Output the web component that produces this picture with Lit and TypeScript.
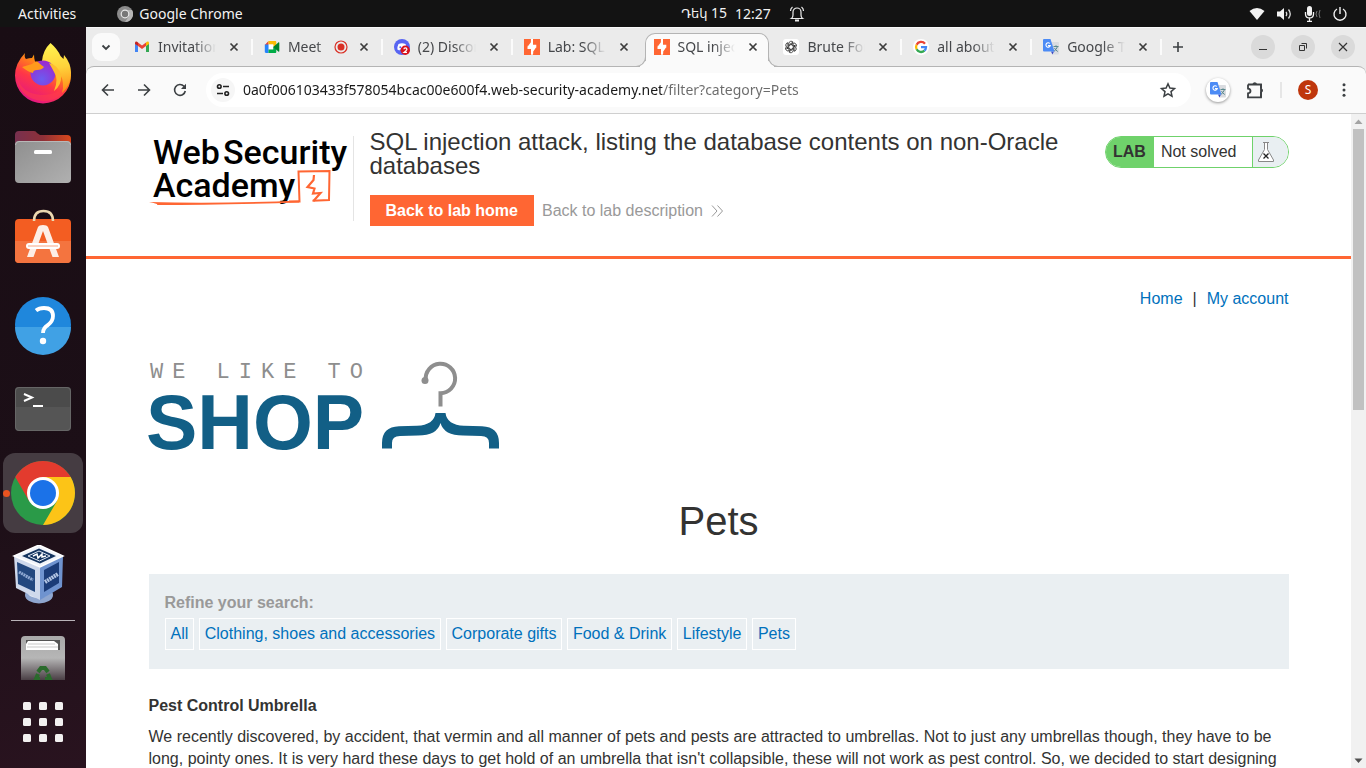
import { LitElement, html, css, svg, nothing, type TemplateResult } from "lit";
import { customElement, property } from "lit/decorators.js";
import { classMap } from "lit/directives/class-map.js";

/* ---------- favicons, 16 x 16 ---------- */

const gmail = svg`<svg viewBox="0 0 16 16" width="16" height="16" aria-hidden="true">
  <path fill="#4285f4" d="M1 4.500V13h3V6.800z"/><path fill="#34a853" d="M12 6.800V13h3V4.500z"/>
  <path fill="#ea4335" d="M4 7V3.600l4 3 4-3V7l-4 3z"/><path fill="#c5221f" d="M1 5V4c0-1.600 1.700-2.200 3-.400V7z"/>
  <path fill="#fbbc04" d="M15 5V4c0-1.600-1.700-2.200-3-.400V7z"/></svg>`;
const meet = svg`<svg viewBox="0 0 16 16" width="16" height="16" aria-hidden="true">
  <path fill="#ea4335" d="M4.500 2v4H.800z"/><path fill="#fbbc04" d="M4.500 2h6.500c.900 0 1.300.500 1.300 1.300V6l-3 2V5.500H4.500z"/>
  <path fill="#fff" d="M4.500 5.500h4.800v5H4.500z"/>
  <path fill="#2684fc" d="M.800 5.500h3.700V14H2c-.800 0-1.200-.500-1.200-1.200z"/>
  <path fill="#00ac47" d="M4.500 10.500h4.800V8l3-2v6.700c0 .900-.400 1.300-1.300 1.300H4.500z"/>
  <path fill="#00832d" d="M9.300 8l5-4.400c.600-.500 1-.200 1 .400v8c0 .600-.400.900-1 .400z"/></svg>`;
const discord = svg`<svg viewBox="0 0 16 16" width="16" height="16" aria-hidden="true">
  <circle cx="8" cy="8" r="8" fill="#5865f2"/><path fill="#fff" d="M4.500 5q3.500-1.500 7 0Q13 8 12.600 10.500l-2 1-.600-1h-4l-.600 1-2-1Q3 8 4.500 5z"/>
  <circle cx="6.300" cy="8.300" r="1" fill="#5865f2"/>
  <circle cx="11.300" cy="11.300" r="4.700" fill="#d8121b"/>
  <path d="M9.900 10.300q0-1.500 1.500-1.500t1.500 1.400q0 .800-2.900 3.200h3" fill="none" stroke="#fff" stroke-width="1.200"/></svg>`;
const burp = svg`<svg viewBox="0 0 16 16" width="16" height="16" aria-hidden="true">
  <path fill="#ff6633" d="M0 0h16v16H0z"/>
  <path fill="#fff" d="M6.800 0H9v5.700h3.300v3L9 15.800H7V10H3.500V7.300z"/>
  <path fill="#ff6633" d="M6.900 0v3.300L3.500 7.800V0zM9.200 16v-3.600l3.200-4.500V16z"/></svg>`;
const openai = svg`<svg viewBox="0 0 16 16" width="16" height="16" aria-hidden="true">
  <rect width="16" height="16" rx="3" fill="#fff"/>
  <g fill="none" stroke="#222" stroke-width=".800">
  ${[0, 60, 120, 180, 240, 300].map(
    (a) => svg`<path transform="rotate(${a} 8 8)" d="M5.800 9.200V4.600a2.400 2.400 0 0 1 4.300-1.400L6.400 5.500"/>`
  )}</g></svg>`;
const google = svg`<svg viewBox="0 0 16 16" width="16" height="16" aria-hidden="true">
  <circle cx="8" cy="8" r="8" fill="#fff"/><g fill="none" stroke-width="2.300">
  <path stroke="#ea4335" d="M12 4.700A5 5 0 0 0 3.600 5.700"/><path stroke="#fbbc04" d="M3.600 5.700a5 5 0 0 0 0 4.600"/>
  <path stroke="#34a853" d="M3.600 10.300a5 5 0 0 0 7.800 1.400"/><path stroke="#4285f4" d="M11.400 11.700A5 5 0 0 0 13 8.200H8"/></g></svg>`;
const translate = svg`<svg viewBox="0 0 16 16" width="16" height="16" aria-hidden="true">
  <path fill="#dadce0" d="M6 3h9q1 0 1 1v10.500q0 1-1 1H9.500z"/>
  <path d="M10.500 7.500h5M13 6.300v1.200M14.500 7.500q-.800 3-3.500 4.800M11.500 9q1 2.300 3.300 3.500" fill="none" stroke="#5c8a8f" stroke-width="1"/>
  <path fill="#3a49c4" d="M8 12.500h3l-1.600 3z"/>
  <path fill="#4c8bf5" d="M1 0h6.500l4 12.500H1q-1 0-1-1V1q0-1 1-1z"/>
  <path d="M6.800 4.500a2.200 2.200 0 1 0 .500 2.100H5" fill="none" stroke="#fff" stroke-width="1.100"/></svg>`;

const cross = svg`<svg viewBox="0 0 16 16" width="16" height="16" aria-hidden="true">
  <path d="M4.500 4.500l7 7M11.500 4.500l-7 7" stroke="#3c3c3c" stroke-width="1.700"/></svg>`;

/* ---------- dock icons, 64 x 64 ---------- */

const firefox = svg`<svg viewBox="0 0 64 64" width="64" height="64" aria-hidden="true">
  <defs>
    <linearGradient id="ffb" x1=".8" y1="0" x2=".3" y2="1"><stop offset="0" stop-color="#fff44f"/><stop offset=".35" stop-color="#ff980e"/><stop offset=".65" stop-color="#ff3647"/><stop offset="1" stop-color="#e31587"/></linearGradient>
    <linearGradient id="ffy" x1=".5" y1="0" x2=".6" y2="1"><stop offset="0" stop-color="#fff44f"/><stop offset=".5" stop-color="#ffd23a"/><stop offset="1" stop-color="#ff8a16"/></linearGradient>
    <radialGradient id="ffp" cx=".45" cy=".75" r=".7"><stop offset="0" stop-color="#6b5cf0"/><stop offset="1" stop-color="#9a2bd0"/></radialGradient>
  </defs>
  <path fill="url(#ffb)" d="M14 12q-1 4 1 6 3-1 6-1l2-3.500q0 4 1 7h12q2-12 3-17 8 7 12 16l5 2q4 6 4 13a28 28 0 0 1-56 0q0-12 10-22.500z"/>
  <path fill="#ff3d4a" opacity=".55" d="M6 36q4 16 24 18 18 0 27-13-4 19-25 19Q8 58 6 36z"/>
  <path fill="url(#ffy)" d="M31 20Q32 9 39.500 2q7 6 10 13 2 2 3 3l.500-4q7 8 7 18 0 12-9 20 3-10-2-19-6-12-18-13z"/>
  <circle cx="32" cy="32" r="12.500" fill="url(#ffp)"/>
  <path fill="#ff9a1c" d="M11 26l10-3q3-3 6-2 3 3 6 5-2 3-7 3-4 0-4 3-5-1-11-6z"/>
  <path fill="#ffbd2e" d="M38 22q9 2 12 12 1 10-7 16 5-12 0-19-2-4-5-9z"/></svg>`;
const files = svg`<svg viewBox="0 0 64 64" width="64" height="64" aria-hidden="true">
  <defs><linearGradient id="fo" x2="1"><stop offset="0" stop-color="#77304f"/><stop offset=".5" stop-color="#8e3038"/><stop offset="1" stop-color="#d9481c"/></linearGradient>
  <linearGradient id="fg" x2="1" y2="1"><stop offset="0" stop-color="#8f8f8f"/><stop offset="1" stop-color="#b0b0b0"/></linearGradient></defs>
  <path fill="url(#fo)" d="M8 6h15q2 0 3 2l3 2h27q4 0 4 4v24H4V10q0-4 4-4z"/>
  <rect x="4" y="16" width="56" height="42" rx="4" fill="url(#fg)"/><path d="M4.500 20q0-3.500 3.500-3.500h48q3.500 0 3.500 3.500" fill="none" stroke="#b8b8b8"/>
  <rect x="23" y="25" width="18" height="4" rx="1.500" fill="#fff"/></svg>`;
const software = svg`<svg viewBox="0 0 64 64" width="64" height="64" aria-hidden="true">
  <rect x="4" y="10" width="56" height="44" rx="4" fill="#f35d22"/><path fill="#f4743f" d="M4 32h56v18q0 4-4 4H8q-4 0-4-4z"/>
  <path d="M23 12q0-10 9.500-10T42 12" fill="none" stroke="#ecd9b0" stroke-width="2.500"/>
  <path fill="#fdeee6" d="M16 48l11-30q1-2 5-2t5 2l11 30h-6.500L32 22l-9.500 26z"/>
  <rect x="15" y="34" width="34" height="6" rx="3" fill="#fff"/><path d="M17 37h30" stroke="#f7a683"/></svg>`;
const help = svg`<svg viewBox="0 0 64 64" width="64" height="64" aria-hidden="true">
  <circle cx="32" cy="32" r="28" fill="#1f87dc"/><path fill="#40a1e5" d="M4 34h56a28 28 0 0 1-56 0z"/>
  <path d="M25 17.500q3-2.500 8-2.500 9 0 9 8 0 5-5 9-5 3-5 8" fill="none" stroke="#fff" stroke-width="3.800"/><circle cx="32" cy="48" r="3.200" fill="#fff"/></svg>`;
const terminal = svg`<svg viewBox="0 0 64 64" width="64" height="64" aria-hidden="true">
  <rect x="4" y="10" width="56" height="44" rx="4" fill="#555"/><path fill="#4b4b4b" d="M8 10h48q4 0 4 4v16H4V14q0-4 4-4z"/>
  <rect x="4.500" y="10.500" width="55" height="43" rx="3.500" fill="none" stroke="#666"/>
  <path d="M13 17l8 3.500-8 3.500" fill="none" stroke="#fff" stroke-width="2"/><path d="M22 29h10" stroke="#fff" stroke-width="2"/></svg>`;
const chrome = svg`<svg viewBox="0 0 64 64" width="64" height="64" aria-hidden="true">
  <circle cx="32" cy="32" r="32" fill="#2a9a48"/>
  <path fill="#fcc417" d="M32 16h27.700A32 32 0 0 1 32 64l14-24z"/>
  <path fill="#e33b2e" d="M4.300 16A32 32 0 0 1 59.700 16H32L18 40z"/>
  <circle cx="32" cy="32" r="16" fill="#fff"/><circle cx="32" cy="32" r="13" fill="#1b72e8"/></svg>`;
const virtualbox = svg`<svg viewBox="0 0 64 64" width="64" height="64" aria-hidden="true">
  <ellipse cx="28" cy="50" rx="14" ry="8.500" fill="#8fa6cf"/><ellipse cx="27" cy="48" rx="10" ry="5" fill="#e4ebf6"/>
  <path fill="#f1f4fa" d="M28 0l24 11-23 11L3 11z"/><path fill="#cfd9ec" d="M3 11l26 11v33L5 43z"/><path fill="#6f93cf" d="M52 11L29 22v33l22-13z"/>
  <path d="M28 0l24 11-23 11L3 11z" fill="none" stroke="#fff" stroke-width="1.500"/>
  <path fill="#14345f" d="M28 3.500l17 7.500-16 7.500L11 11z"/><path d="M28 6l11 5-10.500 5L17 11z" fill="none" stroke="#dfe7f4"/>
  <path d="M22 11l4-2 1 4 4-4v3l4-1" fill="none" stroke="#fff" stroke-width="1.500"/>
  <path fill="#23487f" d="M6 17l18 8v22L7 39z"/><path fill="#1b3c78" d="M48 17l-15 8v22l15-9z"/>
  <path d="M8 27l14 8" stroke="#8fa9d3" stroke-width="3" stroke-dasharray="2 .600"/><path d="M34 37l13-8" stroke="#b4c6e4" stroke-width="4" stroke-dasharray="2 .600"/></svg>`;
const trash = svg`<svg viewBox="0 0 64 44" width="64" height="44" aria-hidden="true">
  <defs><linearGradient id="tr" x2="0" y2="1"><stop offset="0" stop-color="#a9a9a9"/><stop offset=".5" stop-color="#b6b6b6"/><stop offset="1" stop-color="#4a3f45"/></linearGradient></defs>
  <path fill="url(#tr)" d="M14 0h36q4 0 4 4v40H10V4q0-4 4-4z"/><path fill="#555" d="M15 4h34v10H15z"/>
  <path fill="#fff" d="M17 5h26l4 3v6H15V8z"/><path d="M17 8h27M16 11h31" stroke="#c9c9c9"/>
  <g fill="none" stroke="#2a6a2c" stroke-width="4"><path d="M27 36l3-4h4l3 4"/><path d="M27 38l-2 5h4M37 38l2 5h-5"/></g></svg>`;
const appGrid = svg`<svg viewBox="0 0 40 40" width="40" height="40" aria-hidden="true">
  ${[0, 16, 32].map((y) => [0, 16, 32].map((x) => svg`<rect x=${x} y=${y} width="8" height="8" rx="1.500" fill="#f2f0f0"/>`))}</svg>`;

/* ---------- desktop top bar ---------- */

@customElement("desktop-bar")
class DesktopBar extends LitElement {
  static styles = css`
    :host { display: grid; grid-template-columns: 1fr auto 1fr; align-items: center; height: 27px; background: #131313;
      color: #f2f2f2; font: 14px/20px "Noto Sans", "DejaVu Sans", sans-serif; }
    .side, .status, .clock { display: flex; align-items: center; }
    .side { padding-left: 18px; gap: 41px; }
    button { display: flex; align-items: center; gap: 6px; padding: 0; border: 0; background: none; color: inherit; font: inherit; }
    .clock { gap: 18px; padding-left: 120px; }
    .status { justify-content: flex-end; gap: 11px; padding-right: 18px; }
    .armenian { font-family: "DejaVu Sans", sans-serif; font-size: 13px; }
    .date { gap: 8px; }
  `;
  render() {
    return html`
      <div class="side">
        <button>Activities</button>
        <button>
          <svg viewBox="0 0 16 16" width="16" height="16" aria-hidden="true"><circle cx="8" cy="8" r="8" fill="#8c8c8c"/><path fill="#b5b5b5" d="M8 4h7A8 8 0 0 1 8 16l4-6z"/><circle cx="8" cy="8" r="4.400" fill="#e8e8e8"/><circle cx="8" cy="8" r="3.200" fill="#777"/></svg>
          Google Chrome
        </button>
      </div>
      <div class="clock">
        <button class="date"><span><span class="armenian">Դեկ</span> 15</span><span>12:27</span></button>
        <svg viewBox="0 0 16 16" width="16" height="16" aria-hidden="true"><path d="M2.500 12.500Q4 11.500 4 9V6a4 4 0 0 1 8 0v3q0 2.500 1.500 3.500zM1.500 5q0-2.500 2-4M14.500 5q0-2.500-2-4" fill="none" stroke="#eee" stroke-width="1.200"/><path d="M6 14.500h4" stroke="#eee" stroke-width="2"/></svg>
      </div>
      <div class="status">
        <svg viewBox="0 0 16 16" width="16" height="16" aria-hidden="true"><path fill="#f2f2f2" d="M.500 5Q8-1 15.500 5L8 14z"/></svg>
        <svg viewBox="0 0 16 16" width="16" height="16" aria-hidden="true"><path fill="#f2f2f2" d="M1 5.500h3L8 2v12l-4-3.500H1z"/><path d="M10 6q1.500 2 0 4M12.500 3.500q3.500 4.500 0 9" fill="none" stroke="#ddd" stroke-width="1.300"/></svg>
        <svg viewBox="0 0 18 16" width="18" height="16" aria-hidden="true"><rect x="4" y="0" width="5" height="10" rx="2.500" fill="#f2f2f2"/><path d="M2.500 6v2q0 4 4 4t4-4V6M6.500 12v3M4 15.300h5" fill="none" stroke="#f2f2f2" stroke-width="1.300"/><path d="M14 5q-2 3 0 6M17 4q-2 4 0 8" fill="none" stroke="#777"/></svg>
        <svg viewBox="0 0 16 16" width="16" height="16" aria-hidden="true"><path d="M5 3a6 6 0 1 0 6 0M8 1v7" fill="none" stroke="#f2f2f2" stroke-width="1.400"/></svg>
      </div>`;
  }
}

/* ---------- dock ---------- */

@customElement("app-dock")
class AppDock extends LitElement {
  static styles = css`
    :host { display: flex; flex-direction: column; align-items: center; padding-top: 4px; box-sizing: border-box;
      background: linear-gradient(165deg, #190d14 0%, #1c0f17 60%, #29131f 100%); overflow: hidden; }
    button { position: relative; display: grid; place-items: center; flex: none; width: 80px; height: 80px; margin: 2px 0; padding: 0;
      border: 0; border-radius: 12px; background: none; }
    .running { background: #453c42; }
    .running::before { content: ""; position: absolute; left: 0; top: 37px; width: 7px; height: 7px; border-radius: 50%; background: #e95420; }
    hr { flex: none; width: 64px; height: 1px; margin: 1px 0 15px; border: 0; background: #b9b3b8; }
    .short { height: 44px; margin: 0 0 22px; }
    .grid { height: 40px; margin: 0; }
  `;
  render() {
    const items: [string, TemplateResult][] = [
      ["Firefox", firefox], ["Files", files], ["Ubuntu Software", software], ["Help", help],
      ["Terminal", terminal], ["Google Chrome", chrome], ["VirtualBox", virtualbox],
    ] as any;
    return html`
      ${items.map(([name, icon]) => html`<button class=${classMap({ running: name === "Google Chrome" })} aria-label=${name}>${icon}</button>`)}
      <hr />
      <button class="short" aria-label="Trash">${trash}</button>
      <button class="grid" aria-label="Show applications">${appGrid}</button>`;
  }
}

/* ---------- browser tab ---------- */

@customElement("browser-tab")
class BrowserTab extends LitElement {
  @property() label = "";
  @property({ attribute: false }) icon: unknown;
  @property({ type: Boolean, reflect: true }) active = false;
  @property({ type: Boolean }) recording = false;
  @property({ type: Boolean }) divider = false;

  static styles = css`
    :host { display: flex; min-width: 0; flex: 1 1 0; max-width: 240px; height: 38px; }
    .tab { position: relative; display: flex; align-items: center; flex: 1; min-width: 0; padding: 0 11px; box-sizing: border-box; height: 38px; }
    .active { height: 34px; margin: 5px 3px 0 2px; padding: 0 7px 7px 8px; background: #fafafa; border: 1px solid #b4b4b4; border-bottom: 0; border-radius: 10px 10px 0 0; }
    .active::before, .active::after { content: ""; position: absolute; bottom: 0; width: 10px; height: 10px; box-sizing: border-box; border-bottom: 1px solid #b4b4b4; }
    .active::before { left: -10px; border-right: 1px solid #b4b4b4; border-bottom-right-radius: 10px; box-shadow: 4px 4px 0 #fafafa; }
    .active::after { right: -10px; border-left: 1px solid #b4b4b4; border-bottom-left-radius: 10px; box-shadow: -4px 4px 0 #fafafa; }
    .title { flex: 1; min-width: 0; margin: 0 10px 0 8px; overflow: hidden; white-space: nowrap; color: #45474a;
      font: 14px/20px "Noto Sans", sans-serif; mask-image: linear-gradient(90deg, #000 62%, transparent); }
    .whole { flex: 0 1 auto; width: 36px; mask-image: linear-gradient(90deg, #000 80%, #0008); }
    .rec { flex: none; margin-right: auto; }
    svg { flex: none; }
    button { display: flex; padding: 0; border: 0; background: none; }
    .sep { position: absolute; right: 0; top: 11px; width: 2px; height: 16px; background: #fbfbfb; }
  `;
  render() {
    return html`<div class=${classMap({ tab: true, active: this.active })}>
      ${this.icon}
      <span class=${classMap({ title: true, whole: this.recording })}>${this.label}</span>
      ${this.recording
        ? html`<svg class="rec" viewBox="0 0 14 14" width="14" height="14" aria-hidden="true"><circle cx="7" cy="7" r="6" fill="none" stroke="#d93025" stroke-width="1.200"/><circle cx="7" cy="7" r="3.500" fill="#d93025"/></svg>`
        : nothing}
      <button aria-label="Close tab">${cross}</button>
      ${this.divider ? html`<span class="sep"></span>` : nothing}
    </div>`;
  }
}

/* ---------- browser chrome ---------- */

@customElement("browser-window")
class BrowserWindow extends LitElement {
  static styles = css`
    :host { display: flex; flex-direction: column; min-width: 0; min-height: 0; background: #ebebeb; overflow: hidden; }
    button { display: grid; place-items: center; flex: none; padding: 0; border: 0; background: none; }
    .strip { display: flex; align-items: center; height: 39px; padding: 0 11px 0 6px; border-top: 1px solid #f8f8f8; box-sizing: border-box; }
    .search { width: 28px; height: 28px; margin-right: 3px; border-radius: 9px; background: #fafafa; }
    .tabs { position: relative; z-index: 1; display: flex; flex: 1; min-width: 0; }
    .plus { width: 32px; height: 28px; }
    .window { display: flex; gap: 16px; margin-left: 57px; }
    .window button { width: 24px; height: 24px; border-radius: 50%; background: #dadada; }
    .toolbar { display: flex; align-items: center; height: 48px; box-sizing: border-box; padding: 0 12px; background: #fafafa;
      border-top: 1px solid #b4b4b4; border-bottom: 1px solid #cfcfcf; border-radius: 8px 8px 0 0; }
    .nav { display: flex; gap: 16px; margin-right: 16px; }
    .nav button, .extras button { width: 20px; height: 20px; }
    .omnibox { display: flex; align-items: center; flex: 1; min-width: 0; height: 34px; padding: 0 13px 0 5px; border-radius: 17px; background: #fff; }
    .site { width: 24px; height: 24px; border-radius: 50%; background: #f6f6f6; }
    .url { flex: 1; min-width: 0; margin: 0 8px; padding: 0; border: 0; outline: 0; font: 14px/20px "Noto Sans", sans-serif;
      color: transparent; background: linear-gradient(90deg, #1a1a1a 419px, #6b6b6b 419px); background-clip: text; -webkit-background-clip: text; }
    .extras { display: flex; align-items: center; margin-left: 15px; }
    .extras .bubble { width: 24px; height: 24px; border-radius: 50%; background: #fff; box-shadow: 0 1px 3px #0006; }
    .extras .puzzle { margin: 0 15px; }
    .bar { width: 2px; height: 16px; background: #e6e6e6; }
    .extras .avatar { margin: 0 16px; border-radius: 50%; background: #bf360c; color: #fff; font: 12px/20px "Noto Sans", sans-serif; }
  `;
  render() {
    const tabs = [
      { label: "Invitation", icon: gmail, divider: true },
      { label: "Meet", icon: meet, divider: true, recording: true },
      { label: "(2) Discord", icon: discord, divider: true },
      { label: "Lab: SQL inj", icon: burp },
      { label: "SQL injection", icon: burp, active: true },
      { label: "Brute Force", icon: openai, divider: true },
      { label: "all about", icon: google, divider: true },
      { label: "Google Translate", icon: translate, divider: true },
    ];
    const line = "#3c4043";
    return html`
      <div class="strip">
        <button class="search" aria-label="Search tabs"><svg viewBox="0 0 16 16" width="16" height="16" aria-hidden="true"><path d="M4.500 6.500L8 10l3.500-3.500" fill="none" stroke=${line} stroke-width="1.800"/></svg></button>
        <div class="tabs">
          ${tabs.map((t) => html`<browser-tab .label=${t.label} .icon=${t.icon} ?active=${t.active} ?recording=${t.recording} ?divider=${t.divider}></browser-tab>`)}
        </div>
        <button class="plus" aria-label="New tab"><svg viewBox="0 0 16 16" width="16" height="16" aria-hidden="true"><path d="M3 8h10M8 3v10" stroke=${line} stroke-width="1.600"/></svg></button>
        <div class="window">
          <button aria-label="Minimize"><svg viewBox="0 0 16 16" width="16" height="16" aria-hidden="true"><path d="M4 10.500h8" stroke="#333"/></svg></button>
          <button aria-label="Restore"><svg viewBox="0 0 16 16" width="16" height="16" aria-hidden="true"><path d="M4.500 6.500h5v5h-5zM6.500 4.500h5v5" fill="none" stroke="#333"/></svg></button>
          <button aria-label="Close"><svg viewBox="0 0 16 16" width="16" height="16" aria-hidden="true"><path d="M4 4l8 8M12 4l-8 8" stroke="#333" stroke-width="1.200"/></svg></button>
        </div>
      </div>
      <div class="toolbar">
        <div class="nav">
          <button aria-label="Back"><svg viewBox="0 0 16 16" width="16" height="16" aria-hidden="true"><path d="M14 8H3M8 2.500L2.500 8 8 13.500" fill="none" stroke=${line} stroke-width="1.600"/></svg></button>
          <button aria-label="Forward"><svg viewBox="0 0 16 16" width="16" height="16" aria-hidden="true"><path d="M2 8h11M8 2.500L13.500 8 8 13.500" fill="none" stroke=${line} stroke-width="1.600"/></svg></button>
          <button aria-label="Reload"><svg viewBox="0 0 16 16" width="16" height="16" aria-hidden="true"><path d="M13.300 9a5.400 5.400 0 1 1-1.300-4.700L13.500 6" fill="none" stroke=${line} stroke-width="1.600"/><path fill=${line} d="M14 1.800V7H9z"/></svg></button>
        </div>
        <div class="omnibox">
          <button class="site" aria-label="Site information"><svg viewBox="0 0 16 16" width="16" height="16" aria-hidden="true"><g fill="none" stroke="#222" stroke-width="1.600"><circle cx="4.300" cy="4.500" r="1.800"/><path d="M8 4.500h6M2 11.500h6"/><circle cx="11.700" cy="11.500" r="1.800"/></g></svg></button>
          <input class="url" type="text" aria-label="Address" .value=${"0a0f006103433f578054bcac00e600f4.web-security-academy.net/filter?category=Pets"} />
          <button aria-label="Bookmark"><svg viewBox="0 0 20 20" width="20" height="20" aria-hidden="true"><path d="M10 3.800l1.900 4.200 4.600.500-3.500 3.100 1 4.600-4-2.400-4 2.400 1-4.600-3.500-3.100 4.600-.500z" fill="none" stroke=${line} stroke-width="1.500"/></svg></button>
        </div>
        <div class="extras">
          <button class="bubble" aria-label="Translate">${translate}</button>
          <button class="puzzle" aria-label="Extensions"><svg viewBox="0 0 20 20" width="20" height="20" aria-hidden="true"><path d="M3 4.500h13v4M16 12v5.300H3v-4q2.500-.300 2.500-2.300T3 8.700V4.500" fill="none" stroke=${line} stroke-width="1.800"/><path fill=${line} d="M7.500 4a2.300 2.300 0 0 1 4.500 0zM16 8.500a2 2 0 0 1 0 4z"/><path d="M16 4v13.500" stroke=${line} stroke-width="1.800"/></svg></button>
          <span class="bar"></span>
          <button class="avatar" aria-label="Profile">S</button>
          <button aria-label="Menu"><svg viewBox="0 0 16 16" width="16" height="16" aria-hidden="true"><g fill=${line}><circle cx="8" cy="2.700" r="1.500"/><circle cx="8" cy="8" r="1.500"/><circle cx="8" cy="13.300" r="1.500"/></g></svg></button>
        </div>
      </div>
      <slot></slot>`;
  }
}

/* ---------- web page ---------- */

@customElement("lab-page")
class LabPage extends LitElement {
  static styles = css`
    :host { display: flex; flex: 1; min-height: 0; background: #fff; color: #333332; font: 16px/22px "Liberation Sans", Arial, sans-serif; }
    .view { flex: 1; min-width: 0; overflow: hidden; }
    .container { max-width: 1140px; margin: 0 auto; }
    a { color: #0071bc; text-decoration: none; }
    h1, h2, h3, p { margin: 0; }
    header { padding: 16px 0 30px; border-bottom: 3px solid #ff6633; }
    .top { display: flex; align-items: flex-start; }
    .logo { flex: none; margin-top: 6px; padding-right: 4px; border-right: 1px solid #e4e4e4; height: 85px; overflow: visible; }
    .info { flex: 1; min-width: 0; padding: 0 40px 0 16px; }
    h2 { font-size: 24px; line-height: 24px; font-weight: 400; }
    .actions { display: flex; align-items: center; gap: 8px; margin-top: 17px; }
    .home { padding: 0 16px; background: #ff6633; color: #fff; font-weight: 700; line-height: 31px; }
    .desc { display: flex; align-items: center; gap: 8px; color: #999; }
    .status { display: flex; flex: none; height: 32px; margin-top: 6px; box-sizing: border-box; border: 1px solid #6fd26b; border-radius: 16px; overflow: hidden; line-height: 30px; }
    .lab { padding: 0 8px 0 7px; background: #6fd26b; font-weight: 700; }
    .state { padding: 0 15px 0 7px; }
    .flask { display: grid; align-items: center; width: 35px; background: #e9eff2; border-left: 1px solid #6fd26b; }
    .menu { display: flex; justify-content: flex-end; gap: 10px; margin-top: 29px; }
    .brand { display: block; margin-top: 50px; overflow: visible; }
    h1 { margin-top: 45px; font-size: 40px; line-height: 48px; font-weight: 400; text-align: center; }
    .filters { margin-top: 29px; padding: 18px 16px 19px; background: #eaeff2; }
    .label { color: #999; font-weight: 700; }
    .chips { margin-top: 4px; }
    .chips a { display: inline-block; padding: 0 5px; border: 1px solid #fff; line-height: 30px; vertical-align: top; }
    h3 { margin: 26px 0 9px; font-size: 16px; line-height: 22px; }
    .scroll { display: flex; flex-direction: column; align-items: center; width: 15px; background: #f1f1f1; }
    .scroll svg { flex: none; }
    .track { flex: 1; width: 11px; }
    .thumb { height: 45%; background: #c1c1c1; }
    .mark { font: 500 34px Roboto, sans-serif; fill: #000; }
    .we { font: 22px "Liberation Mono", monospace; letter-spacing: 9px; fill: #8e8e8e; }
    .shop { font: 700 77px "Liberation Sans", sans-serif; fill: #125f86; }
  `;
  render() {
    const filters = ["All", "Clothing, shoes and accessories", "Corporate gifts", "Food & Drink", "Lifestyle", "Pets"];
    return html`
      <div class="view">
        <header><div class="container top">
          <svg class="logo" viewBox="0 0 200 85" width="200" height="85" role="img" aria-label="Web Security Academy">
            <text class="mark" x="4" y="28">Web</text><text class="mark" x="74" y="28">Security</text><text class="mark" x="4" y="61">Academy</text>
            <path fill="#ff6633" d="M0 66q70 2 150-1.500v2Q70 69 8 69q2-1-8-3z"/>
            <path d="M140 65.500h10.500L149.500 35.500l31-.500-.500 29-16.500.700" fill="none" stroke="#ff6633" stroke-width="2"/>
            <path d="M165 39l-.500 5-6 7 7 1.500-1.500 5 7.500-.500-7 8" fill="none" stroke="#ff6633" stroke-width="2.200"/>
          </svg>
          <div class="info">
            <h2>SQL injection attack, listing the database contents on non-Oracle databases</h2>
            <div class="actions">
              <a class="home" href="#">Back to lab home</a>
              <a class="desc" href="#">Back to lab description
                <svg viewBox="0 0 12 12" width="12" height="12" aria-hidden="true"><path d="M1 .500L6 6l-5 5.500M6.500.500l5 5.500-5 5.500" fill="none" stroke="#999"/></svg></a>
            </div>
          </div>
          <div class="status">
            <span class="lab">LAB</span><span class="state">Not solved</span>
            <span class="flask"><svg viewBox="0 0 26 22" width="26" height="22" aria-hidden="true"><path d="M10 1.500h6M11.500 1.500v7L5.500 19v1.500h15V19l-6-10.500v-7" fill="#fff" stroke="#888"/><path d="M10.500 12.500l5 5M15.500 12.500l-5 5" stroke="#222" stroke-width="1.300"/></svg></span>
          </div>
        </div></header>
        <main class="container">
          <nav class="menu"><a href="#">Home</a><span>|</span><a href="#">My account</a></nav>
          <svg class="brand" viewBox="0 0 352 92" width="352" height="92" role="img" aria-label="We like to shop">
            <text class="we" x="1" y="18">WE LIKE TO</text>
            <text class="shop" x="-3" y="89">SHOP</text>
            <path d="M276.800 20A14.700 14.700 0 1 1 291.500 33.200V46.500" fill="none" stroke="#8e8e8e" stroke-width="4"/><circle cx="276" cy="20.500" r="3.500" fill="#8e8e8e"/>
            <path fill="#125f86" d="M233 88.500V83q0-16 17-16.700l18-.500Q285 65 286.500 53h10Q298 65 315 65.800l18 .500q17 .700 17 16.700v5.500h-10V83q0-7-8-7l-18-.500Q295 75.500 291.500 63 288 75.500 269 75.500l-18 .500q-8 0-8 7v5.500z"/>
          </svg>
          <h1>Pets</h1>
          <section class="filters">
            <div class="label">Refine your search:</div>
            <nav class="chips">${filters.map((f) => html`<a href="#">${f}</a> `)}</nav>
          </section>
          <h3>Pest Control Umbrella</h3>
          <p>We recently discovered, by accident, that vermin and all manner of pets and pests are attracted to umbrellas. Not to just any umbrellas though, they have to be long, pointy ones. It is very hard these days to get hold of an umbrella that isn't collapsible, these will not work as pest control. So, we decided to start designing</p>
        </main>
      </div>
      <div class="scroll" aria-hidden="true">
        <svg viewBox="0 0 15 15" width="15" height="15"><path fill="#a3a3a3" d="M3.500 10h8L7.500 5.500z"/></svg>
        <div class="track"><div class="thumb"></div></div>
        <svg viewBox="0 0 15 15" width="15" height="15"><path fill="#505050" d="M3.500 5.500h8l-4 4.500z"/></svg>
      </div>`;
  }
}

@customElement("app-root")
class AppRoot extends LitElement {
  static styles = css`
    :host { display: grid; grid-template: auto minmax(0, 1fr) / 86px minmax(0, 1fr); height: 100vh; overflow: hidden; }
    desktop-bar { grid-column: 1 / -1; }
  `;
  render() {
    return html`<desktop-bar></desktop-bar><app-dock></app-dock><browser-window><lab-page></lab-page></browser-window>`;
  }
}
